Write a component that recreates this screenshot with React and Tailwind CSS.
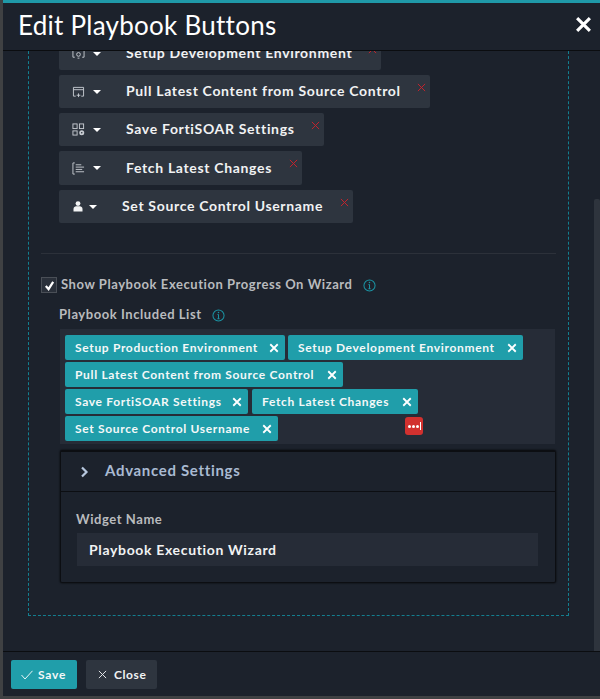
import React from "react";

const font = { fontFamily: '"Lato", "Liberation Sans", sans-serif' };

function X({ className }) {
  return (
    <svg viewBox="0 0 10 10" className={className} fill="none" stroke="currentColor" strokeWidth="1.1">
      <path d="M1 1L9 9M9 1L1 9" />
    </svg>
  );
}

function BoldX({ className }) {
  return (
    <svg viewBox="0 0 12 12" className={className} fill="none" stroke="currentColor" strokeWidth="2.2">
      <path d="M1.5 1.5L10.5 10.5M10.5 1.5L1.5 10.5" />
    </svg>
  );
}

function Caret({ className = "" }) {
  return (
    <svg viewBox="0 0 8 4" className={`w-[8px] h-[4px] ${className}`}>
      <path d="M0 0H8L4 4Z" fill="#fff" />
    </svg>
  );
}

const IconDev = () => (
  <svg viewBox="0 0 14 14" className="w-[13px] h-[13px]" fill="none" stroke="#c8ccd2" strokeWidth="1">
    <path d="M3 1H1v10h2M11 1h2v10h-2M6 12h2" />
    <circle cx="7" cy="8" r="2" />
  </svg>
);
const IconPull = () => (
  <svg viewBox="0 0 14 13" className="w-[13px] h-[12px]" fill="none" stroke="#c8ccd2" strokeWidth="1">
    <path d="M4 11H1.5V1.5h11V11H10M1.5 4h11M7 8v4M5 10h4" />
  </svg>
);
const IconSave = () => (
  <svg viewBox="0 0 14 14" className="w-[13px] h-[13px]" fill="none" stroke="#c8ccd2" strokeWidth="1">
    <rect x="1" y="1" width="4.5" height="5" />
    <rect x="8" y="1" width="4.5" height="5" />
    <rect x="1" y="8.5" width="4.5" height="4.5" />
    <circle cx="10.5" cy="10.5" r="1.8" strokeWidth="1.8" />
  </svg>
);
const IconFetch = () => (
  <svg viewBox="0 0 14 14" className="w-[13px] h-[13px]" fill="none" stroke="#c8ccd2" strokeWidth="1">
    <path d="M3 1H1v12h2M4 3h6M4 5.5h9M4 8h7M4 10.5h9" />
  </svg>
);
const IconUser = () => (
  <svg viewBox="0 0 10 11" className="w-[10px] h-[11px]" fill="#f2f3f4">
    <circle cx="5" cy="2.6" r="2.4" />
    <path d="M0.5 10.5V8c0-1.8 1.5-2.7 2.6-2.7h3.8C8 5.3 9.5 6.2 9.5 8v2.5z" />
  </svg>
);

function PbRow({ icon, label, cls, caretCls, xCls }) {
  return (
    <div className={`relative flex items-center rounded-[2px] bg-[#2e353f] ${cls}`}>
      <div className="w-[14px] ml-[12px] flex justify-center shrink-0">{icon}</div>
      <Caret className={caretCls} />
      <span className="ml-[25px] -mt-[2px] text-[14px] font-bold text-[#f1f2f3] tracking-[0.67px] whitespace-nowrap">{label}</span>
      <X className={`absolute top-[8px] w-[9px] h-[9px] text-[#c4232e] ${xCls}`} />
    </div>
  );
}

function Tag({ label, w }) {
  return (
    <div className={`flex items-center justify-between h-[25px] rounded-[2px] bg-[#209eaa] pl-[10px] pr-[6px] text-[12px] font-bold text-[#f4f8f8] tracking-[0.67px] whitespace-nowrap ${w}`}>
      <span>{label}</span>
      <BoldX className="w-[10px] h-[10px] text-white" />
    </div>
  );
}

function Info({ className = "" }) {
  return (
    <svg viewBox="0 0 14 14" className={`w-[13px] h-[13px] ${className}`} fill="none" stroke="#1b93a3" strokeWidth="1.1">
      <circle cx="7" cy="7" r="6" />
      <path d="M7 6v4.2M5.8 10.4h2.4M5.9 6h1.1" />
      <circle cx="7" cy="3.8" r="0.8" fill="#1b93a3" stroke="none" />
    </svg>
  );
}

export default function App() {
  return (
    <div style={font} className="relative w-[600px] h-[699px] bg-[#3f4143] pl-[3px] pb-[3px] overflow-hidden">
      <div className="flex flex-col h-full bg-[#1c222c] border-t-[3px] border-[#1f99a8]">
        <header className="flex items-center justify-between h-[48px] shrink-0 border-b border-[#0b0d10] pl-[15px] pr-[8px]">
          <h1 className="text-[26px] leading-[32px] font-normal text-white tracking-[0.26px] -mt-[3px]">Edit Playbook Buttons</h1>
          <BoldX className="w-[17px] h-[17px] text-white -mt-[4px]" />
        </header>

        <div className="flex flex-1 min-h-0">
          <main className="relative flex-1 min-w-0 overflow-hidden">
            <div className="-mt-[15px] ml-[25px] w-[541px] h-[580px] border border-dashed border-[#137f90]">
              <div className="pl-[30px] flex flex-col items-start gap-[5px]">
                <PbRow icon={<IconDev />} label="Setup Development Environment" cls="w-[322px] h-[33px]" caretCls="ml-[8px]" xCls="left-[309px]" />
                <PbRow icon={<IconPull />} label="Pull Latest Content from Source Control" cls="w-[371px] h-[33px]" caretCls="ml-[8px]" xCls="left-[358px]" />
                <PbRow icon={<IconSave />} label="Save FortiSOAR Settings" cls="w-[265px] h-[33px]" caretCls="ml-[8px]" xCls="left-[252px]" />
                <PbRow icon={<IconFetch />} label="Fetch Latest Changes" cls="w-[243px] h-[34px]" caretCls="ml-[8px]" xCls="left-[230px]" />
                <PbRow icon={<IconUser />} label="Set Source Control Username" cls="w-[294px] h-[33px]" caretCls="ml-[4px]" xCls="left-[281px]" />
              </div>

              <div className="mx-[12px] mt-[30px] border-t border-[#2c313a]" />

              <div className="ml-[12px] mt-[23px] flex items-center h-[16px]">
                <div className="w-[16px] h-[16px] flex items-center justify-center bg-[#2a303a] border border-[#4a4f57]">
                  <svg viewBox="0 0 12 12" className="w-[11px] h-[11px]" fill="none" stroke="#fff" strokeWidth="2.4">
                    <path d="M2 6.5L5 10L10 2" />
                  </svg>
                </div>
                <span className="ml-[4px] text-[13px] font-bold text-[#b9bbbe] tracking-[0.56px] whitespace-nowrap">Show Playbook Execution Progress On Wizard</span>
                <Info className="ml-[10px]" />
              </div>

              <div className="ml-[30px] mt-[14px] flex items-center h-[16px]">
                <span className="text-[13px] font-bold text-[#b9bbbe] tracking-[0.56px] whitespace-nowrap">Playbook Included List</span>
                <Info className="ml-[10px]" />
              </div>

              <div className="relative ml-[31px] mt-[6px] w-[495px] h-[115px] bg-[#262c37] pl-[5px] pt-[6px] flex flex-col gap-[2px]">
                <div className="flex gap-[3px]">
                  <Tag label="Setup Production Environment" w="w-[220px]" />
                  <Tag label="Setup Development Environment" w="w-[235px]" />
                </div>
                <div className="flex">
                  <Tag label="Pull Latest Content from Source Control" w="w-[278px]" />
                </div>
                <div className="flex gap-[4px]">
                  <Tag label="Save FortiSOAR Settings" w="w-[183px]" />
                  <Tag label="Fetch Latest Changes" w="w-[166px]" />
                </div>
                <div className="flex">
                  <Tag label="Set Source Control Username" w="w-[213px]" />
                </div>
                <div className="absolute left-[345px] top-[88px] w-[18px] h-[18px] rounded-[3px] bg-[#d2312f] flex items-center justify-center gap-[1px]">
                  <span className="w-[3px] h-[3px] rounded-full bg-white" />
                  <span className="w-[3px] h-[3px] rounded-full bg-white" />
                  <span className="w-[3px] h-[3px] rounded-full bg-white" />
                  <span className="w-[1px] h-[8px] bg-white" />
                </div>
              </div>

              <section className="ml-[31px] mt-[6px] w-[496px] h-[133px] rounded-[2px] border border-[#0c0e12] border-t-2 shadow-[0_0_2px_#000]">
                <div className="flex items-center h-[40px] border-b border-[#0c0e12]">
                  <svg viewBox="0 0 8 12" className="ml-[19px] w-[9px] h-[12px]" fill="none" stroke="#b7c7de" strokeWidth="2.2">
                    <path d="M1.5 1.5L6 6L1.5 10.5" />
                  </svg>
                  <span className="ml-[16px] -mt-[2px] text-[15px] font-bold text-[#a9bad2] tracking-[0.68px] whitespace-nowrap">Advanced Settings</span>
                </div>
                <label className="block ml-[15px] mt-[19px] text-[13px] leading-[16px] font-bold text-[#b9bbbe] tracking-[0.56px]">Widget Name</label>
                <div className="ml-[16px] mt-[6px] w-[461px] h-[33px] bg-[#262c37] flex items-center pl-[12px] text-[14px] font-bold text-[#f1f2f3] tracking-[0.66px] whitespace-nowrap">Playbook Execution Wizard</div>
              </section>
            </div>
          </main>
          <div className="w-[6px] shrink-0 flex flex-col">
            <div className="h-[148px]" />
            <div className="flex-1 bg-[#2e343d] rounded-t-[2px]" />
          </div>
        </div>

        <footer className="flex items-start h-[45px] shrink-0 border-t border-[#0b0d10] pl-[8px] pt-[8px] gap-[9px]">
          <button className="flex items-center w-[66px] h-[29px] rounded-[2px] bg-[#209eaa] text-[12px] font-bold text-[#f4f8f8] tracking-[0.8px]">
            <svg viewBox="0 0 12 10" className="ml-[10px] w-[12px] h-[10px]" fill="none" stroke="#e8f5f6" strokeWidth="1">
              <path d="M0.5 5L4 9L11.5 0.8" />
            </svg>
            <span className="ml-[5px]">Save</span>
          </button>
          <button className="flex items-center w-[71px] h-[29px] rounded-[2px] bg-[#2e353f] text-[12px] font-bold text-[#f1f2f3] tracking-[0.6px]">
            <X className="ml-[12px] w-[9px] h-[9px] text-[#e4e6e8]" />
            <span className="ml-[7px]">Close</span>
          </button>
        </footer>
      </div>
    </div>
  );
}
